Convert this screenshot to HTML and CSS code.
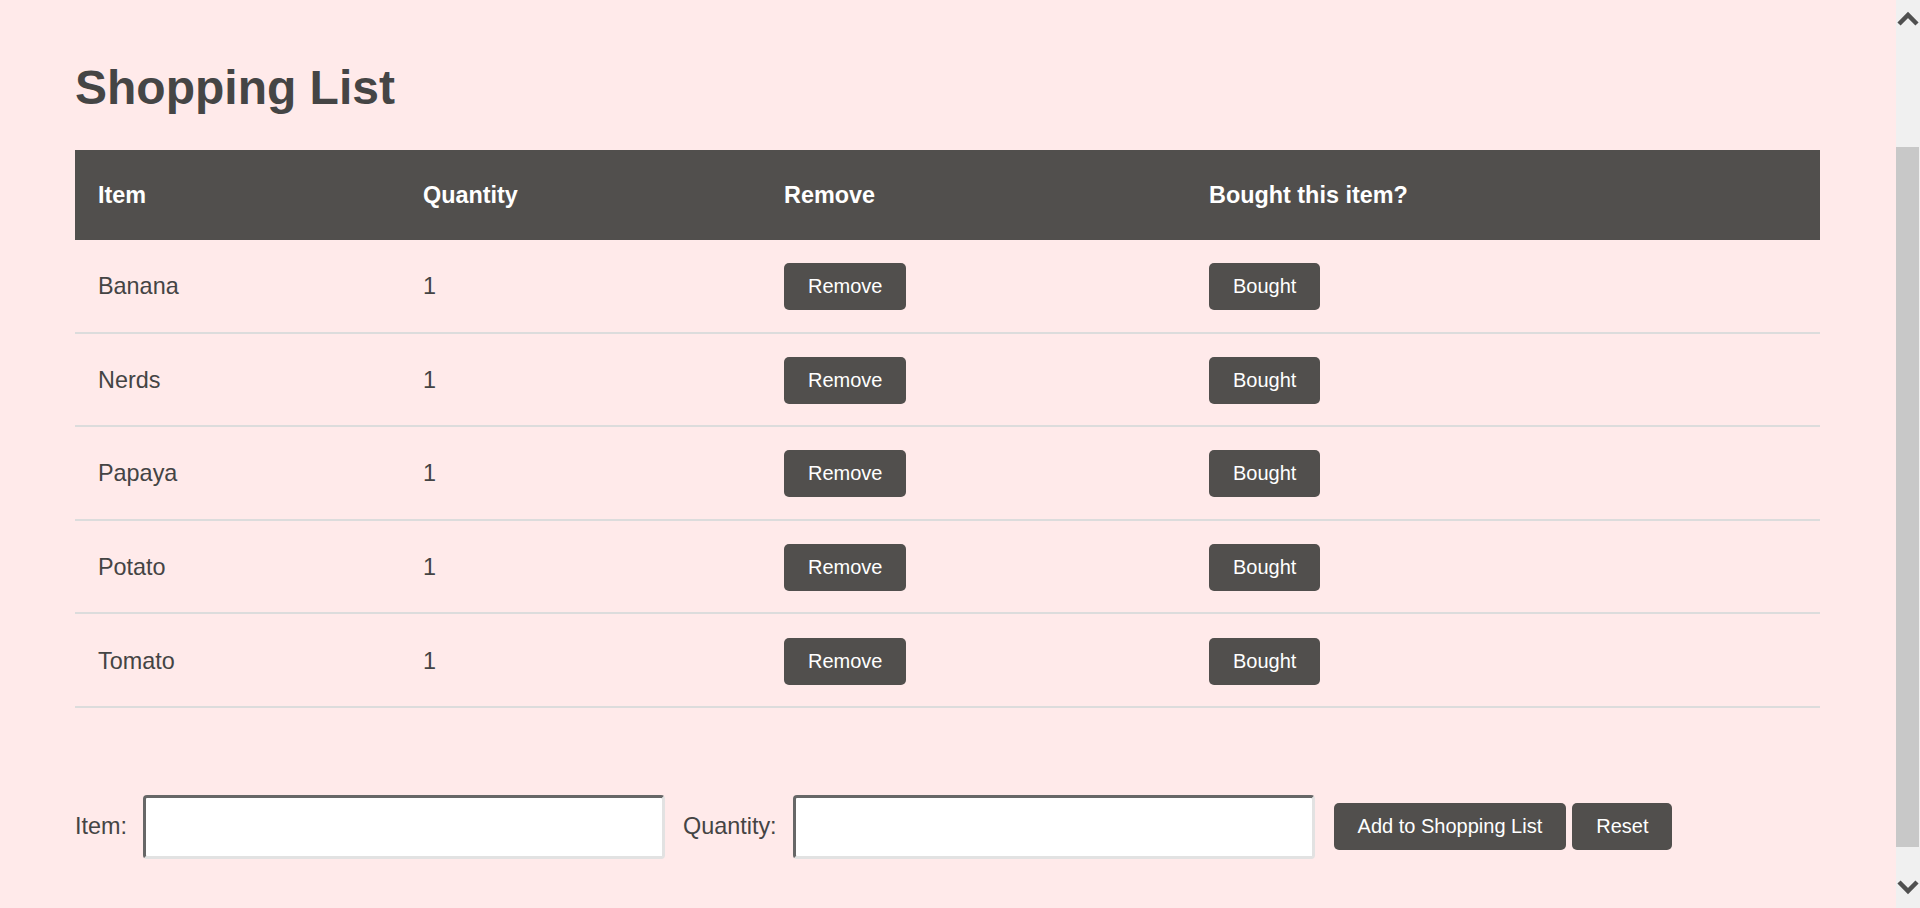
FILE: index.html
```html
<!DOCTYPE html>
<html lang="en">
<head>
<meta charset="utf-8">
<title>Shopping List</title>
<link rel="stylesheet" href="styles.css">
</head>
<body>
<main class="page">
  <h1 class="title">Shopping List</h1>
  <table class="list">
    <thead>
      <tr>
        <th class="c1">Item</th>
        <th class="c2">Quantity</th>
        <th class="c3">Remove</th>
        <th class="c4">Bought this item?</th>
      </tr>
    </thead>
    <tbody>
      <tr><td>Banana</td><td>1</td><td><button class="btn">Remove</button></td><td><button class="btn">Bought</button></td></tr>
      <tr><td>Nerds</td><td>1</td><td><button class="btn">Remove</button></td><td><button class="btn">Bought</button></td></tr>
      <tr><td>Papaya</td><td>1</td><td><button class="btn">Remove</button></td><td><button class="btn">Bought</button></td></tr>
      <tr><td>Potato</td><td>1</td><td><button class="btn">Remove</button></td><td><button class="btn">Bought</button></td></tr>
      <tr><td>Tomato</td><td>1</td><td><button class="btn">Remove</button></td><td><button class="btn">Bought</button></td></tr>
    </tbody>
  </table>
  <form class="add-form">
    <label class="lbl" for="item">Item:</label>
    <input class="field field-item" id="item" type="text">
    <label class="lbl" for="qty">Quantity:</label>
    <input class="field field-qty" id="qty" type="text">
    <div class="actions">
      <button type="button" class="btn">Add to Shopping List</button>
      <button type="reset" class="btn">Reset</button>
    </div>
  </form>
</main>
<div class="scrollbar" aria-hidden="true">
  <svg class="arrow arrow-up" width="24" height="20" viewBox="0 0 24 20"><path d="M3 16 L12 7 L21 16" fill="none" stroke="#505050" stroke-width="4.5"/></svg>
  <div class="thumb"></div>
  <svg class="arrow arrow-down" width="24" height="20" viewBox="0 0 24 20"><path d="M3 4 L12 13 L21 4" fill="none" stroke="#505050" stroke-width="4.5"/></svg>
</div>
</body>
</html>
```
FILE: styles.css
```css
html, body {
  margin: 0;
  padding: 0;
}
body {
  background: #ffeaea;
  font-family: "Liberation Sans", Arial, sans-serif;
  color: #444;
  height: 908px;
  overflow: hidden;
}
.page {
  margin-right: 24px;
  padding: 60px 76px 0 75px;
}
.title {
  margin: 0 0 35px;
  font-size: 48px;
  line-height: 55px;
  font-weight: bold;
  color: #454545;
}
.list {
  width: 100%;
  border-collapse: collapse;
  table-layout: fixed;
}
.list th {
  height: 90px;
  padding: 0 0 0 23px;
  background: #514f4d;
  color: #fff;
  text-align: left;
  font-size: 23.4px;
  font-weight: bold;
}
.c1 { width: 302px; }
.c2 { width: 338px; }
.c3 { width: 402px; }
.list td {
  height: 89.6px;
  padding: 2px 0 0 23px;
  border-bottom: 2px solid #dcdcdc;
  font-size: 23.4px;
  color: #444;
  vertical-align: middle;
}
.btn {
  height: 47px;
  padding: 0 24px;
  border: none;
  border-radius: 5px;
  background: #514f4d;
  color: #fff;
  font-family: "Liberation Sans", Arial, sans-serif;
  font-size: 20px;
  vertical-align: middle;
  cursor: pointer;
}
.add-form {
  display: flex;
  align-items: center;
  margin-top: 87px;
}
.lbl {
  font-size: 23.4px;
  color: #444;
  margin-right: 16px;
}
.field {
  box-sizing: border-box;
  width: 522px;
  height: 64px;
  border-style: solid;
  border-width: 3px;
  border-color: #676767 #e2e2e2 #e2e2e2 #676767;
  border-radius: 4px;
  background: #fff;
  font-size: 22px;
  padding: 0 10px;
}
.field-item { margin-right: 18px; }
.field-qty { margin-right: 19px; }
.actions {
  display: flex;
  gap: 6px;
}
.scrollbar {
  position: fixed;
  top: 0;
  right: 0;
  width: 24px;
  height: 908px;
  background: #f0f0f0;
}
.arrow {
  position: absolute;
  left: 0;
}
.arrow-up { top: 8px; }
.arrow-down { top: 878px; }
.thumb {
  position: absolute;
  left: 0;
  top: 147px;
  width: 23px;
  height: 700px;
  background: #c8c8c8;
}
```
